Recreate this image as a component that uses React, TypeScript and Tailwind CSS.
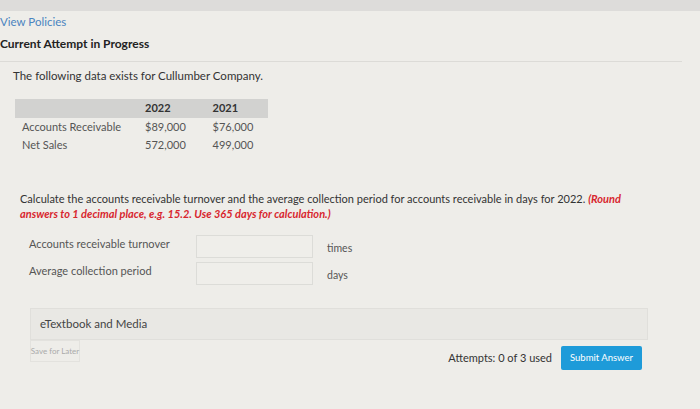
const rows = [
  { label: "Accounts Receivable", a: "$89,000", b: "$76,000" },
  { label: "Net Sales", a: "572,000", b: "499,000" },
];

const answers = [
  { label: "Accounts receivable turnover", unit: "times" },
  { label: "Average collection period", unit: "days" },
];

export default function App() {
  return (
    <div className="w-[700px] h-[409px] overflow-hidden bg-[#eeede9] text-[#333] font-['Lato','Liberation_Sans',sans-serif]">
      <div className="h-[11px] bg-[#dddcda]" />
      <div className="pr-[18px]">
        <div className="pt-[2px] text-[11.5px] leading-[18px] text-[#4a84c0]">View Policies</div>
        <div className="mt-[4px] text-[12px] leading-[18px] font-bold text-[#222]">Current Attempt in Progress</div>
        <div className="mt-[8px] border-t border-[#dcdbd7]" />
      </div>

      <div className="pl-[13px] pt-[6px] text-[11.5px] leading-[16px] text-[#333]">
        The following data exists for Cullumber Company.
      </div>

      <table className="ml-[15px] mt-[15px] w-[253px] text-[11px] border-collapse">
        <thead>
          <tr className="bg-[#d2d2d0] h-[19px]">
            <th className="w-[118px]" />
            <th className="text-left font-bold pl-[12px] text-[#333]">2022</th>
            <th className="text-left font-bold pl-[12px] text-[#333]">2021</th>
          </tr>
        </thead>
        <tbody>
          {rows.map((r) => (
            <tr key={r.label} className="h-[18px] text-[#555]">
              <td className="pl-[7px] whitespace-nowrap">{r.label}</td>
              <td className="pl-[12px]">{r.a}</td>
              <td className="pl-[12px]">{r.b}</td>
            </tr>
          ))}
        </tbody>
      </table>

      <p className="ml-[20px] w-[618px] pt-[37px] text-[11px] leading-[15px]">
        <span className="text-[#333]">
          Calculate the accounts receivable turnover and the average collection period for accounts receivable in days for 2022.{" "}
        </span>
        <span className="font-bold italic text-[#d8262e]">
          (Round answers to 1 decimal place, e.g. 15.2. Use 365 days for calculation.)
        </span>
      </p>

      <div className="pl-[29px] pt-[14px] flex flex-col gap-[4px]">
        {answers.map((a) => (
          <div key={a.label} className="flex items-center h-[23px]">
            <div className="w-[167px] text-[11px] text-[#555] -mt-[4px]">{a.label}</div>
            <div className="w-[117px] h-[23px] border border-[#dcdcd8] bg-[#efeeea]" />
            <div className="ml-[14px] mt-[5px] text-[10.5px] text-[#555]">{a.unit}</div>
          </div>
        ))}
      </div>

      <div className="ml-[30px] mt-[23px] w-[618px] h-[32px] flex items-center pl-[9px] border border-[#e0dfdb] bg-[#e9e8e4] text-[11.5px] text-[#444]">
        eTextbook and Media
      </div>

      <div className="ml-[30px] mr-[58px] flex items-start justify-between">
        <div className="w-[50px] h-[22px] border border-[#e3e2de] flex items-center justify-center text-[8px] text-[#aaa] whitespace-nowrap">
          Save for Later
        </div>
        <div className="flex items-center gap-[9px] mt-[6px]">
          <span className="text-[11px] text-[#333]">Attempts: 0 of 3 used</span>
          <button className="w-[81px] h-[24px] rounded-[2px] bg-[#1e9bd9] text-white text-[9.5px]">Submit Answer</button>
        </div>
      </div>
    </div>
  );
}
